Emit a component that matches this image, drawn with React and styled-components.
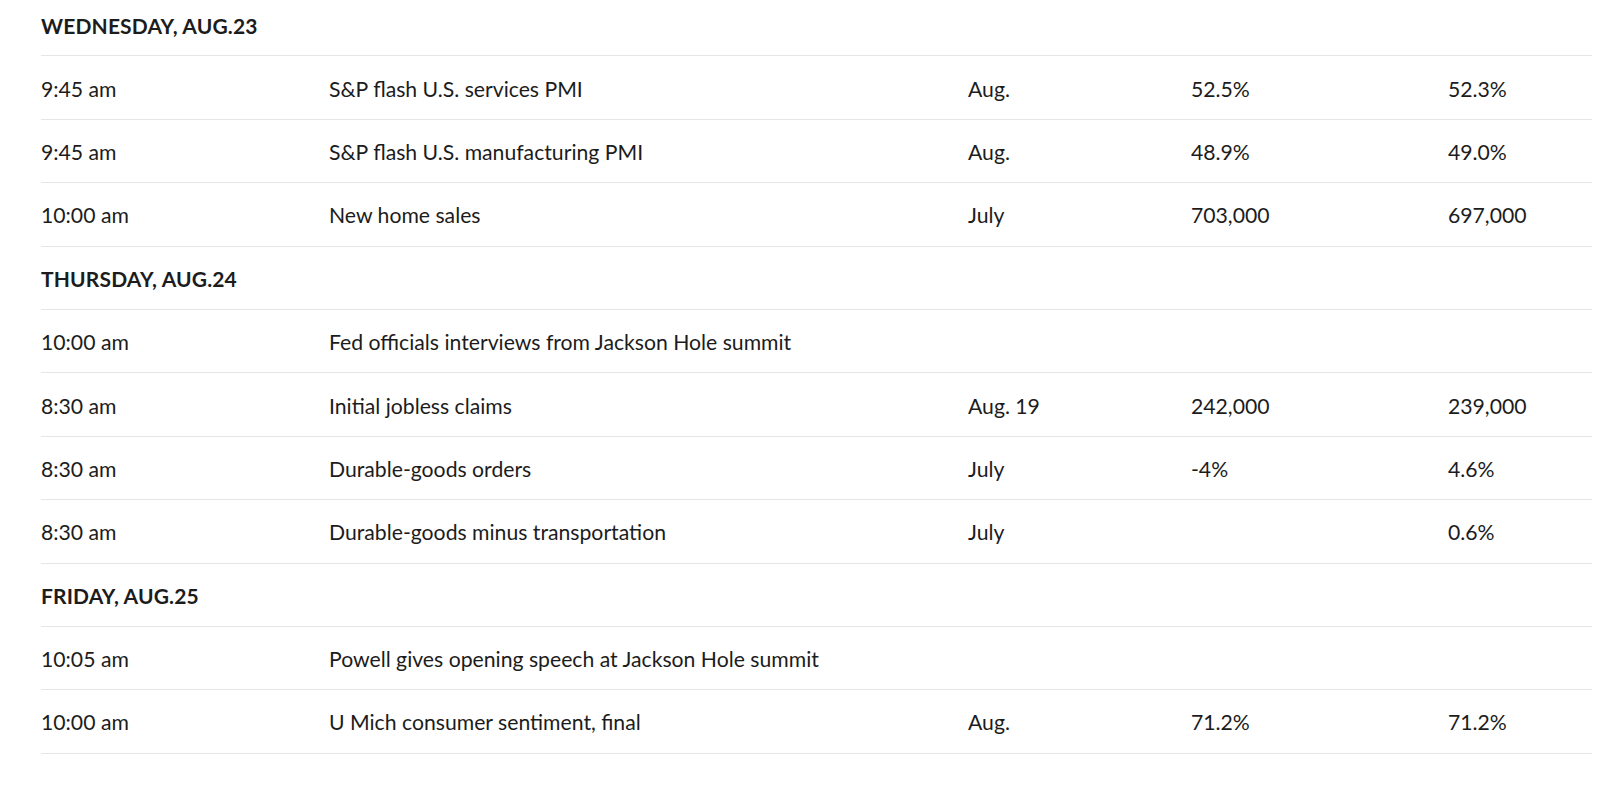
import React from "react";
import styled, { createGlobalStyle } from "styled-components";

const GlobalStyle = createGlobalStyle`
    body {
        margin: 0;
        background: #ffffff;
        font-family: "Lato", "Liberation Sans", sans-serif;
        color: #1c1c1c;
    }
`

const StyledCalendar = styled.div`
    margin: -7px 8px 0 41px;
`

const StyledRow = styled.div`
    display: grid;
    grid-template-columns: 288px 639px 223px 257px 1fr;
    align-items: center;
    box-sizing: border-box;
    height: 63.4px;
    padding-top: 2px;
    border-bottom: 1px solid #e6e6e6;
    font-size: ${props => props.$heading ? "21px" : "21.2px"};
    font-weight: ${props => props.$heading ? 700 : 400};
    letter-spacing: ${props => props.$heading ? "0.15px" : "0"};
    text-transform: ${props => props.$heading ? "uppercase" : "none"};
`

const StyledCell = styled.span`
    white-space: nowrap;
`

const days = [
    {
        title: "Wednesday, Aug.23",
        events: [
            ["9:45 am", "S&P flash U.S. services PMI", "Aug.", "52.5%", "52.3%"],
            ["9:45 am", "S&P flash U.S. manufacturing PMI", "Aug.", "48.9%", "49.0%"],
            ["10:00 am", "New home sales", "July", "703,000", "697,000"],
        ],
    },
    {
        title: "Thursday, Aug.24",
        events: [
            ["10:00 am", "Fed officials interviews from Jackson Hole summit", "", "", ""],
            ["8:30 am", "Initial jobless claims", "Aug. 19", "242,000", "239,000"],
            ["8:30 am", "Durable-goods orders", "July", "-4%", "4.6%"],
            ["8:30 am", "Durable-goods minus transportation", "July", "", "0.6%"],
        ],
    },
    {
        title: "Friday, Aug.25",
        events: [
            ["10:05 am", "Powell gives opening speech at Jackson Hole summit", "", "", ""],
            ["10:00 am", "U Mich consumer sentiment, final", "Aug.", "71.2%", "71.2%"],
        ],
    },
]

function App() {
    return (
        <>
            <GlobalStyle />
            <StyledCalendar>
                {days.map(day => (
                    <React.Fragment key={day.title}>
                        <StyledRow $heading>
                            <StyledCell>{day.title}</StyledCell>
                        </StyledRow>
                        {day.events.map((event, i) => (
                            <StyledRow key={i}>
                                {event.map((cell, j) => (
                                    <StyledCell key={j}>{cell}</StyledCell>
                                ))}
                            </StyledRow>
                        ))}
                    </React.Fragment>
                ))}
            </StyledCalendar>
        </>
    )
}

export default App
